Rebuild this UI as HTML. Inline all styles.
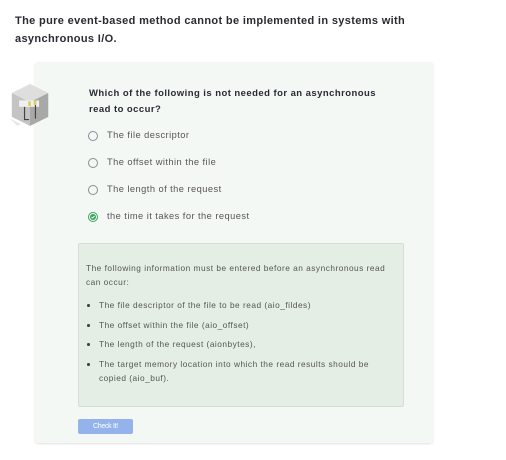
<!DOCTYPE html>
<html><head><meta charset="utf-8"><style>
*{margin:0;padding:0;box-sizing:border-box}
body{width:506px;height:460px;background:#fff;font-family:"Liberation Sans",sans-serif;position:relative;overflow:hidden;color:#222}
.title{position:absolute;left:15px;top:12px;width:420px;font-size:11px;font-weight:bold;line-height:18px;color:#2a2a33;letter-spacing:.35px}
.card{position:absolute;left:35px;top:62px;width:398px;height:381px;background:#f4f8f5;border-radius:3px;box-shadow:0 1px 2px rgba(0,0,0,.12)}
.q{position:absolute;left:89px;top:86px;width:300px;font-size:9.5px;font-weight:bold;line-height:16px;color:#2a2a33;white-space:nowrap;letter-spacing:.45px}
.opt{position:absolute;left:88px;font-size:9.3px;color:#555;letter-spacing:.45px}
.opt .r{position:absolute;left:0;top:0;width:10px;height:10px;border:1px solid #8a8a9a;border-radius:50%}
.opt span{position:absolute;left:19px;top:-1px;white-space:nowrap}
.fb{position:absolute;left:78px;top:243px;width:326px;height:164px;background:#e4eee4;border:1px solid #d3dfd3;border-radius:2px;font-size:8.3px;color:#555;line-height:14px;letter-spacing:.5px}
.fb p{position:absolute;left:7px;top:17px;width:315px;white-space:nowrap}
.fb .li{position:absolute;left:20px;width:295px;white-space:nowrap}
.fb .li:before{content:"";position:absolute;left:-12px;top:6px;width:2.5px;height:2.5px;background:#444;border-radius:50%}
.btn{position:absolute;left:78px;top:419px;width:55px;height:15px;background:#93b3ea;border-radius:2px;color:#fff;font-size:7px;text-align:center;line-height:15px;letter-spacing:-.3px}
</style></head><body>
<div class="title">The pure event-based method cannot be implemented in systems with asynchronous I/O.</div>
<div class="card"></div>
<svg style="position:absolute;left:10px;top:82px" width="40" height="46" viewBox="0 0 44 50">
<polygon points="22,2 42,12 42,38 22,48 2,38 2,12" fill="#c4c4c4"/>
<polygon points="22,2 42,12 22,22 2,12" fill="#dedede"/>
<polygon points="22,22 42,12 42,38 22,48" fill="#a8a8a8"/>
<rect x="10" y="20" width="22" height="7" fill="#f0f0f0"/>
<rect x="20" y="21" width="3" height="5" fill="#d8d060"/>
<rect x="26" y="20" width="3" height="5" fill="#d8d060"/>
<path d="M16 27v14h5M28 25v15" stroke="#444" stroke-width="1.3" fill="none"/>
<polygon points="0,40 12,46 8,48" fill="#e6e6e6"/>
</svg>
<div class="q">Which of the following is not needed for an asynchronous<br>read to occur?</div>
<div class="opt" style="top:131px"><div class="r"></div><span>The file descriptor</span></div>
<div class="opt" style="top:158px"><div class="r"></div><span>The offset within the file</span></div>
<div class="opt" style="top:185px"><div class="r"></div><span>The length of the request</span></div>
<div class="opt" style="top:212px"><div class="r" style="border-color:#3aa35a"></div>
<svg style="position:absolute;left:2px;top:2px" width="6" height="6" viewBox="0 0 6 6"><circle cx="3" cy="3" r="3" fill="#3aa35a"/><path d="M1.5 3l1 1 2-2" stroke="#fff" stroke-width=".9" fill="none"/></svg>
<span>the time it takes for the request</span></div>
<div class="fb">
<p>The following information must be entered before an asynchronous read<br>can occur:</p>
<div class="li" style="top:54px">The file descriptor of the file to be read (aio_fildes)</div>
<div class="li" style="top:74px">The offset within the file (aio_offset)</div>
<div class="li" style="top:93px">The length of the request (aionbytes),</div>
<div class="li" style="top:113px">The target memory location into which the read results should be<br>copied (aio_buf).</div>
</div>
<div class="btn">Check It!</div>
</body></html>
